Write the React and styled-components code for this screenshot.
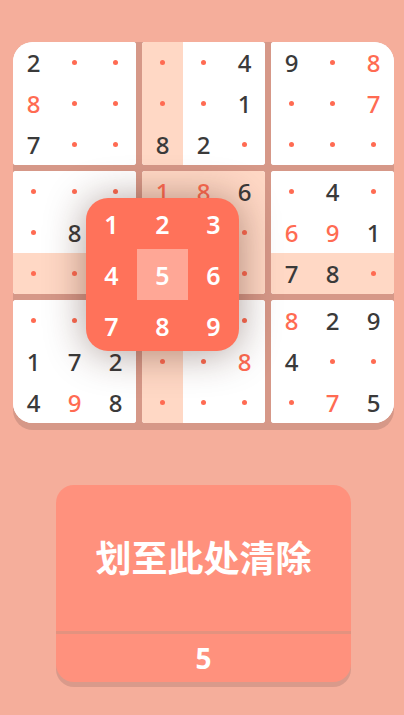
import styled, { createGlobalStyle } from "styled-components";

const GlobalStyle = createGlobalStyle`
  html, body {
    margin: 0;
    padding: 0;
    background: #F5AE9B;
  }
  * { box-sizing: border-box; }
`;

// 9 boxes, each 9 cells: "." = empty, "r" prefix = entered by user (red)
const boxes = [
  ["2", ".", ".", "r8", ".", ".", "7", ".", "."],
  [".", ".", "4", ".", ".", "1", "8", "2", "."],
  ["9", ".", "r8", ".", ".", "r7", ".", ".", "."],
  [".", ".", ".", ".", "8", ".", ".", ".", "."],
  ["r1", "r8", "6", ".", ".", ".", ".", ".", "."],
  [".", "4", ".", "r6", "r9", "1", "7", "8", "."],
  [".", ".", ".", "1", "7", "2", "4", "r9", "8"],
  [".", ".", ".", ".", ".", "r8", ".", ".", "."],
  ["r8", "2", "9", "4", ".", ".", ".", "r7", "5"],
];

// selected cell: row 6, col 4 (1-based)
const SEL_ROW = 5;
const SEL_COL = 3;

const corners = {
  0: "20px 3px 3px 3px",
  2: "3px 20px 3px 3px",
  6: "3px 3px 3px 20px",
  8: "3px 3px 20px 3px",
};

const App = () => {
  return (
    <Screen>
      <GlobalStyle />
      <Board>
        {boxes.map((cells, b) => (
          <Box key={b} $radius={corners[b] || "3px"}>
            {cells.map((v, i) => {
              const row = Math.floor(b / 3) * 3 + Math.floor(i / 3);
              const col = (b % 3) * 3 + (i % 3);
              const lit = row === SEL_ROW || col === SEL_COL || b === 4;
              return (
                <Cell key={i} $lit={lit}>
                  {v === "." ? (
                    <Dot />
                  ) : (
                    <Digit $user={v[0] === "r"}>{v.replace("r", "")}</Digit>
                  )}
                </Cell>
              );
            })}
          </Box>
        ))}
        <Picker>
          {[1, 2, 3, 4, 5, 6, 7, 8, 9].map((n) => (
            <PickItem key={n} $active={n === 5}>{n}</PickItem>
          ))}
        </Picker>
      </Board>
      <ClearButton>
        <ClearLabel>划至此处清除</ClearLabel>
        <ClearValue>5</ClearValue>
      </ClearButton>
    </Screen>
  );
};

export default App;

const Screen = styled.div`
  height: 715px;
  padding-top: 42px;
  background: #F5AE9B;
  overflow: hidden;
  font-family: "Noto Sans", "Open Sans", sans-serif;
`;

const Board = styled.div`
  position: relative;
  margin-left: 13px;
  width: 381px;
  display: grid;
  grid-template-columns: repeat(3, 123px);
  gap: 6px;
  padding-bottom: 7px;
  background: #D69888;
  border-radius: 20px;
`;

const Box = styled.div`
  display: grid;
  grid-template-columns: repeat(3, 41px);
  grid-template-rows: repeat(3, 41px);
  background: #fff;
  border-radius: ${(p) => p.$radius};
  overflow: hidden;
`;

const Cell = styled.div`
  display: flex;
  align-items: center;
  justify-content: center;
  background: ${(p) => (p.$lit ? "#FFD8C5" : "#fff")};
`;

const Dot = styled.span`
  width: 5px;
  height: 5px;
  border-radius: 50%;
  background: #FF6B52;
`;

const Digit = styled.span`
  font-size: 24px;
  font-weight: 500;
  line-height: 1;
  color: ${(p) => (p.$user ? "#FF6B52" : "#3A3A3A")};
`;

const Picker = styled.div`
  position: absolute;
  left: 73px;
  top: 156px;
  width: 153px;
  height: 153px;
  display: grid;
  grid-template-columns: repeat(3, 51px);
  grid-template-rows: repeat(3, 51px);
  background: #FF725A;
  border-radius: 22px;
  box-shadow: 0 2px 40px rgba(60, 25, 15, 0.42);
  overflow: hidden;
`;

const PickItem = styled.div`
  display: flex;
  align-items: center;
  justify-content: center;
  font-size: 25px;
  font-weight: 600;
  color: #fff;
  background: ${(p) => (p.$active ? "#FFA796" : "transparent")};
`;

const ClearButton = styled.div`
  margin: 55px 0 0 56px;
  width: 295px;
  display: flex;
  flex-direction: column;
  background: #FF917D;
  border-radius: 18px;
  box-shadow: 0 5px 0 #D99A8B;
  overflow: hidden;
`;

const ClearLabel = styled.div`
  height: 149px;
  display: flex;
  align-items: center;
  justify-content: center;
  padding-bottom: 4px;
  font-family: "Noto Sans CJK SC", "Noto Sans", sans-serif;
  font-size: 36px;
  font-weight: 700;
  color: #fff;
  border-bottom: 3px solid #E3927F;
`;

const ClearValue = styled.div`
  height: 48px;
  display: flex;
  align-items: center;
  justify-content: center;
  font-size: 28px;
  font-weight: 700;
  color: #fff;
`;
